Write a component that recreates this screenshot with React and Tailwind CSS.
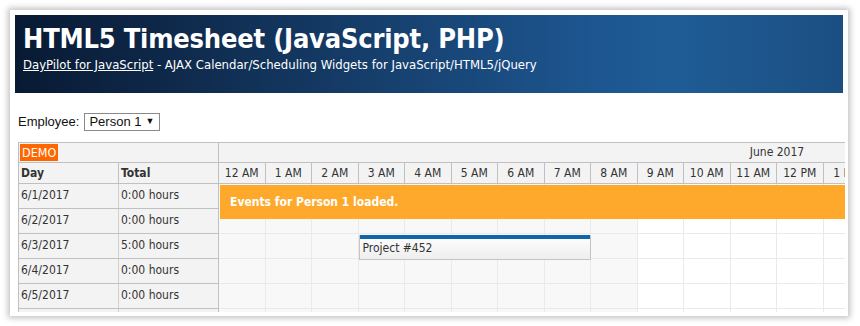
import React from 'react'

const hours = ['12 AM', '1 AM', '2 AM', '3 AM', '4 AM', '5 AM', '6 AM', '7 AM', '8 AM', '9 AM', '10 AM', '11 AM', '12 PM', '1 PM']

const rows = [
  { day: '6/1/2017', total: '0:00 hours' },
  { day: '6/2/2017', total: '0:00 hours' },
  { day: '6/3/2017', total: '5:00 hours' },
  { day: '6/4/2017', total: '0:00 hours' },
  { day: '6/5/2017', total: '0:00 hours' },
  { day: '', total: '' },
]

const tahoma = "font-['DejaVu_Sans_Condensed','DejaVu_Sans',sans-serif]"

const App = () => {
  return (
    <div className="h-[326px] w-[860px] overflow-hidden bg-white pl-[10px] pt-[10px]">
      <div className="h-[306px] w-[838px] overflow-hidden bg-white p-[5px] shadow-[0_0_6px_2px_rgba(0,0,0,0.25)]">
        {/* Header */}
        <div className={`h-[78px] bg-[linear-gradient(90deg,#081a33_0%,#0f2a4c_20%,#1d5690_70%,#1f5c95_80%,#1b4f82_100%)] pl-[8px] pt-[8px] text-white ${tahoma}`}>
          <h1 className="text-[27px] font-bold leading-[32px] tracking-[-0.2px]">HTML5 Timesheet (JavaScript, PHP)</h1>
          <div className="mt-[1px] text-[13px] leading-[17px]">
            <span className="underline">DayPilot for JavaScript</span> - AJAX Calendar/Scheduling Widgets for JavaScript/HTML5/jQuery
          </div>
        </div>

        {/* Employee */}
        <div className="ml-[3px] mt-[20px] flex h-[18px] items-center gap-[5px] font-['Liberation_Sans',Arial,sans-serif] text-[13px] text-[#111]">
          <span>Employee:</span>
          <div className="flex h-[18px] w-[76px] items-center gap-[4px] border border-[#8a8a8a] pl-[4px] text-[13px]">
            <span>Person 1</span>
            <span className="text-[9px]">▼</span>
          </div>
        </div>

        {/* Scheduler */}
        <div className={`ml-[3px] mt-[11px] flex h-[170px] w-[827px] overflow-hidden border-l border-t border-[#c0c0c0] text-[12px] text-[#333] ${tahoma}`}>
          {/* Row headers */}
          <div className="w-[200px] shrink-0 border-r border-[#c0c0c0] bg-[#f3f3f3]">
            <div className="h-[20px] border-b border-[#c0c0c0] pl-[1px] pt-[1px]">
              <span className="inline-block h-[17px] bg-[#ff6600] px-[2px] text-[12.5px] leading-[17px] text-white">DEMO</span>
            </div>
            <div className="flex h-[21px] border-b border-[#c0c0c0] font-bold leading-[20px]">
              <div className="w-[100px] border-r border-[#c0c0c0] pl-[2px]">Day</div>
              <div className="pl-[2px]">Total</div>
            </div>
            {rows.map((r, i) => (
              <div key={i} className="flex h-[25px] border-b border-[#c0c0c0] leading-[22px]">
                <div className="w-[100px] border-r border-[#d0d0d0] pl-[2px]">{r.day}</div>
                <div className="pl-[2px]">{r.total}</div>
              </div>
            ))}
          </div>

          {/* Timeline */}
          <div className="relative min-w-0 flex-1 overflow-hidden">
            <div className="h-[20px] w-[1116px] border-b border-[#c0c0c0] bg-[#f3f3f3] text-center leading-[19px]">June 2017</div>
            <div className="flex h-[21px] w-[1116px] border-b border-[#c0c0c0] bg-[#f3f3f3]">
              {hours.map((h) => (
                <div key={h} className="h-full w-[46.5px] shrink-0 border-r border-[#c0c0c0] text-center leading-[20px]">{h}</div>
              ))}
            </div>
            {rows.map((r, ri) => (
              <div key={ri} className="flex h-[25px] w-[1116px]">
                {hours.map((h, i) => (
                  <div
                    key={h}
                    className={`h-full w-[46.5px] shrink-0 border-b border-r border-[#eaeaea] ${i < 9 ? 'bg-[#f8f8f8]' : 'bg-white'}`}
                  />
                ))}
              </div>
            ))}

            {/* Event */}
            <div className="absolute left-[139.5px] top-[92px] h-[25px] w-[232.5px] border-x border-b border-[#c4c4c4] bg-[linear-gradient(#ffffff,#eeeeee)]">
              <div className="h-[4px] bg-[#1066a8]" />
              <div className="pl-[3px] leading-[19px]">Project #452</div>
            </div>

            {/* Message */}
            <div className="absolute left-[1px] right-0 top-[42px] h-[34px] bg-[#fea92c] pl-[10px] text-[12px] font-bold leading-[34px] text-white">
              Events for Person 1 loaded.
            </div>
          </div>
        </div>
      </div>
    </div>
  )
}

export default App
